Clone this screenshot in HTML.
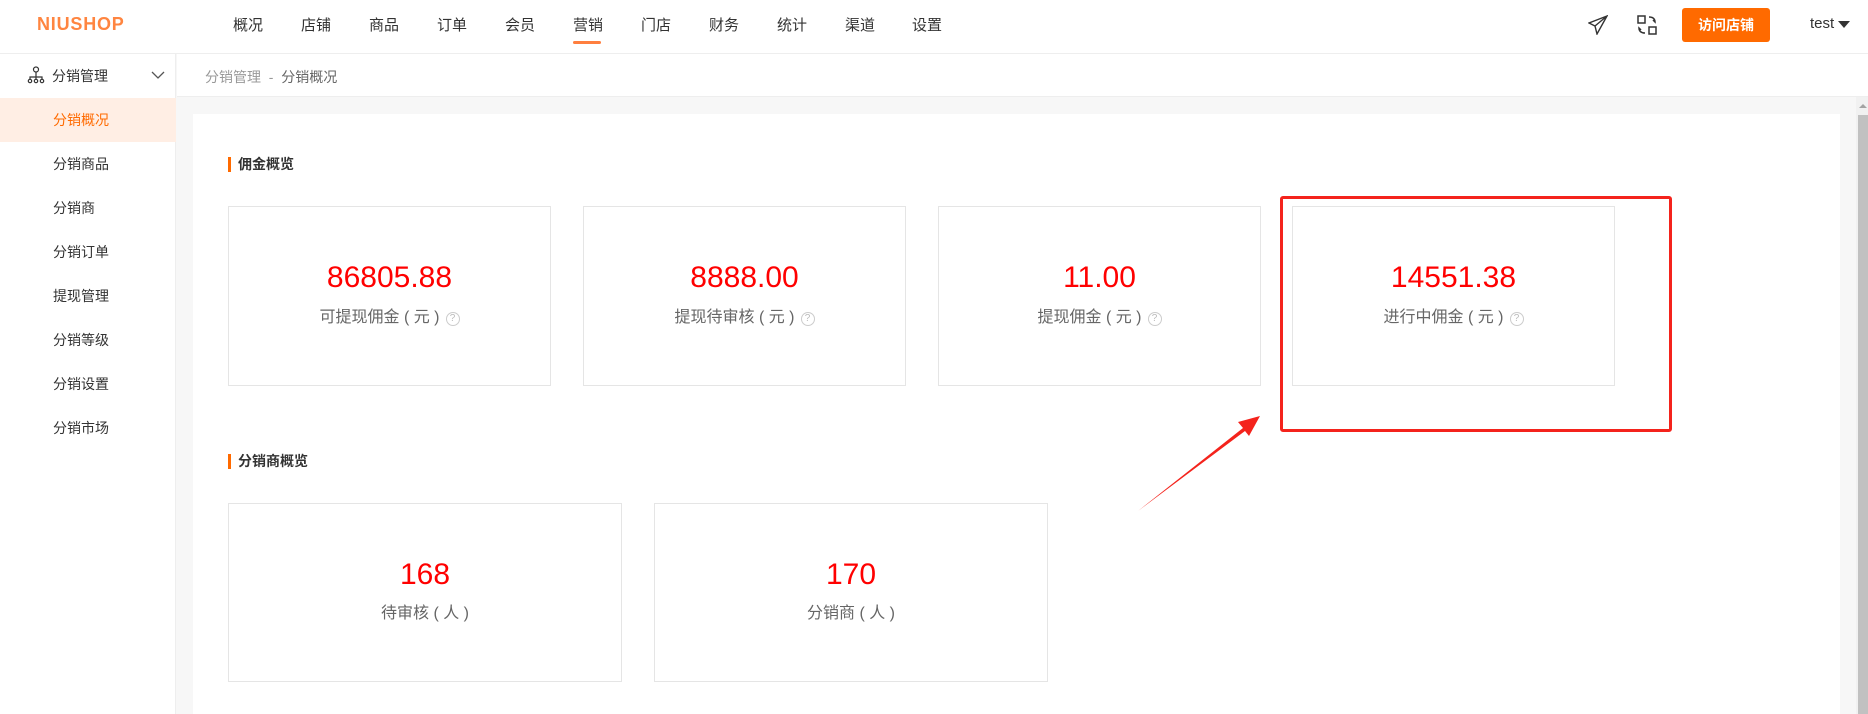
<!DOCTYPE html>
<html><head><meta charset="utf-8"><style>
*{margin:0;padding:0;box-sizing:border-box}
body{width:1868px;height:714px;overflow:hidden;background:#f7f7f7;font-family:"Liberation Sans","Noto Sans CJK SC",sans-serif;position:relative;color:#333}
.a{position:absolute}
.hdr{left:0;top:0;width:1868px;height:54px;background:#fff;border-bottom:1px solid #eee}
.nav{top:14px;font-size:15px;color:#333}
.side{left:0;top:54px;width:176px;height:660px;background:#fff;border-right:1px solid #eee}
.si{left:0;width:176px;height:44px;line-height:44px;padding-left:53px;font-size:14px;color:#333}
.card{border:1px solid #e5e5e5;background:#fff;text-align:center}
.num{font-size:30px;color:#f00;position:absolute;width:100%;left:0}
.lbl{font-size:16px;color:#666;position:absolute;width:100%;left:0}
.q{display:inline-block;width:14px;height:14px;border:1px solid #ccc;border-radius:50%;font-size:10px;line-height:12px;color:#bbb;vertical-align:1px;margin-left:6px}
.tt{font-size:14px;font-weight:bold;color:#333;border-left:3px solid #ff6a00;padding-left:7px;line-height:15px}
</style></head><body>
<div class="a hdr"></div>
<div class="a" style="left:37px;top:14px;font-size:18px;font-weight:bold;color:#ff8540;letter-spacing:0.8px">NIUSHOP</div>
<div class="a nav" style="left:233px">概况</div>
<div class="a nav" style="left:301px">店铺</div>
<div class="a nav" style="left:369px">商品</div>
<div class="a nav" style="left:437px">订单</div>
<div class="a nav" style="left:505px">会员</div>
<div class="a nav" style="left:573px">营销</div>
<div class="a" style="left:573px;top:41px;width:28px;height:3px;background:#ff7f3f;border-radius:2px"></div>
<div class="a nav" style="left:641px">门店</div>
<div class="a nav" style="left:709px">财务</div>
<div class="a nav" style="left:777px">统计</div>
<div class="a nav" style="left:845px">渠道</div>
<div class="a nav" style="left:912px">设置</div>
<svg class="a" style="left:1588px;top:15px" width="20" height="20" viewBox="0 0 20 20" fill="none" stroke="#333" stroke-width="1.4"><path d="M19 1L1 8l6 3 2 8z M19 1L7 11"/></svg>
<svg class="a" style="left:1636px;top:14px" width="22" height="22" viewBox="0 0 22 22" fill="none" stroke="#333" stroke-width="1.5"><rect x="2" y="2" width="7" height="7"/><rect x="13" y="13" width="7" height="7"/><path d="M13 3c4 0 6 2 6 5l-2-2M9 19c-4 0-6-2-6-5l2 2"/></svg>
<div class="a" style="left:1682px;top:8px;width:88px;height:34px;background:#ff6a00;border-radius:3px;color:#fff;font-size:14px;font-weight:bold;text-align:center;line-height:34px">访问店铺</div>
<div class="a" style="left:1810px;top:15px;font-size:15px;color:#333">test</div>
<div class="a" style="left:1838px;top:21px;width:0;height:0;border-left:6px solid transparent;border-right:6px solid transparent;border-top:7px solid #333"></div>

<div class="a side"></div>
<svg class="a" style="left:27px;top:66px" width="18" height="18" viewBox="0 0 18 18" fill="none" stroke="#333" stroke-width="1.2"><circle cx="9" cy="3.5" r="2.5"/><path d="M9 6v4M3 13v-2h12v2M9 10v3"/><circle cx="3" cy="15" r="1.7"/><circle cx="9" cy="15" r="1.7"/><circle cx="15" cy="15" r="1.7"/></svg>
<div class="a" style="left:52px;top:66px;font-size:14px;color:#333">分销管理</div>
<svg class="a" style="left:151px;top:71px" width="14" height="9" viewBox="0 0 14 9" fill="none" stroke="#555" stroke-width="1.3"><path d="M1 1l6 6 6-6"/></svg>
<div class="a si" style="top:98px;background:#ffeee4;color:#ff6a00">分销概况</div>
<div class="a si" style="top:142px">分销商品</div>
<div class="a si" style="top:186px">分销商</div>
<div class="a si" style="top:230px">分销订单</div>
<div class="a si" style="top:274px">提现管理</div>
<div class="a si" style="top:318px">分销等级</div>
<div class="a si" style="top:362px">分销设置</div>
<div class="a si" style="top:406px">分销市场</div>

<div class="a" style="left:177px;top:54px;width:1691px;height:43px;background:#fff;border-bottom:1px solid #eee"></div>
<div class="a" style="left:205px;top:67px;font-size:14px;color:#999">分销管理 &nbsp;- &nbsp;<span style="color:#666">分销概况</span></div>

<div class="a" style="left:193px;top:114px;width:1647px;height:600px;background:#fff"></div>
<div class="a" style="left:1856px;top:97px;width:12px;height:617px;background:#f1f1f1"></div>
<div class="a" style="left:1858px;top:115px;width:10px;height:599px;background:#c1c1c1"></div>
<div class="a" style="left:1859px;top:104px;width:0;height:0;border-left:4px solid transparent;border-right:4px solid transparent;border-bottom:4px solid #a3a3a3"></div>

<div class="a tt" style="left:228px;top:157px">佣金概览</div>
<div class="a card" style="left:228px;top:206px;width:323px;height:180px"><div class="num" style="top:54px">86805.88</div><div class="lbl" style="top:96px">可提现佣金 ( 元 )<span class="q">?</span></div></div>
<div class="a card" style="left:583px;top:206px;width:323px;height:180px"><div class="num" style="top:54px">8888.00</div><div class="lbl" style="top:96px">提现待审核 ( 元 )<span class="q">?</span></div></div>
<div class="a card" style="left:938px;top:206px;width:323px;height:180px"><div class="num" style="top:54px">11.00</div><div class="lbl" style="top:96px">提现佣金 ( 元 )<span class="q">?</span></div></div>
<div class="a card" style="left:1292px;top:206px;width:323px;height:180px"><div class="num" style="top:54px">14551.38</div><div class="lbl" style="top:96px">进行中佣金 ( 元 )<span class="q">?</span></div></div>
<div class="a" style="left:1280px;top:196px;width:392px;height:236px;border:3px solid #f4231c;border-radius:3px"></div>
<svg class="a" style="left:1130px;top:400px" width="140" height="120" viewBox="1130 400 140 120"><path d="M1138 511L1243 428 1238 422 1260 416 1249 436 1245 431Z" fill="#f4231c"/></svg>

<div class="a tt" style="left:228px;top:454px">分销商概览</div>
<div class="a card" style="left:228px;top:503px;width:394px;height:179px"><div class="num" style="top:54px">168</div><div class="lbl" style="top:95px">待审核 ( 人 )</div></div>
<div class="a card" style="left:654px;top:503px;width:394px;height:179px"><div class="num" style="top:54px">170</div><div class="lbl" style="top:95px">分销商 ( 人 )</div></div>
</body></html>
